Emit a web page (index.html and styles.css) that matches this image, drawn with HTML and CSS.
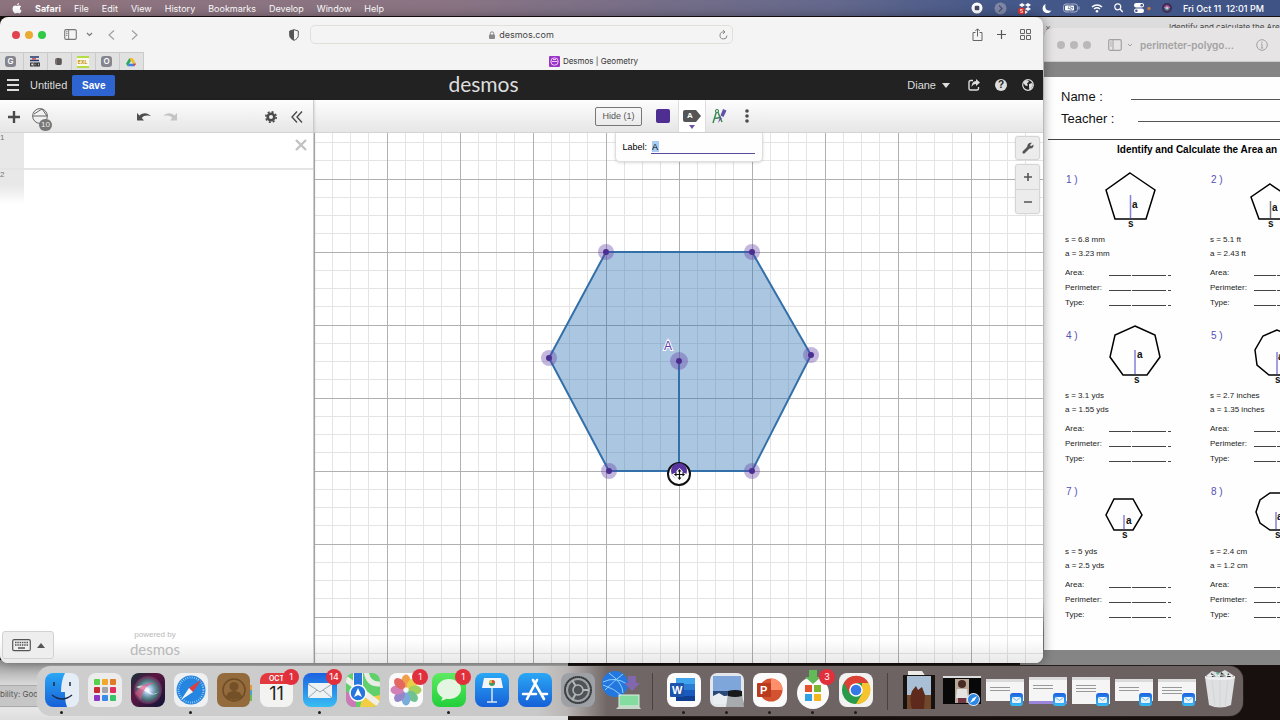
FILE: index.html
```html
<!DOCTYPE html>
<html lang="en">
<head>
<meta charset="utf-8">
<title>Desmos | Geometry</title>
<link rel="stylesheet" href="styles.css">
</head>
<body>
<svg class="defs" aria-hidden="true">
  <defs>
    <linearGradient id="g-blue" x2="0" y2="1"><stop offset="0" stop-color="#2aa7f5"/><stop offset="1" stop-color="#1660d8"/></linearGradient>
    <linearGradient id="g-mail" x2="0" y2="1"><stop offset="0" stop-color="#1c62e0"/><stop offset="1" stop-color="#39bdf3"/></linearGradient>
    <linearGradient id="g-green" x2="0" y2="1"><stop offset="0" stop-color="#5eea62"/><stop offset="1" stop-color="#22cf3a"/></linearGradient>
    <radialGradient id="g-siri"><stop offset="0" stop-color="#fff"/><stop offset=".3" stop-color="#9dbde0"/><stop offset=".7" stop-color="#4a8c86" stop-opacity=".8"/><stop offset="1" stop-color="#8b3b78" stop-opacity=".5"/></radialGradient>
    <linearGradient id="g-siribg" x2="1" y2="1"><stop offset="0" stop-color="#12303a"/><stop offset=".4" stop-color="#5b1741"/><stop offset="1" stop-color="#0c1436"/></linearGradient>
    <pattern id="grid" width="73" height="73" patternUnits="userSpaceOnUse" x="0" y="46">
      <path d="M18.5 0V73M36.500 0V73M54.500 0V73M0 18.500H73M0 36.500H73M0 54.500H73" stroke="#e4e4e4" fill="none"/>
      <path d="M.5 0V73M0 .5H73" stroke="#b0b0b0" fill="none"/>
    </pattern>
    <symbol id="i-mailbadge" viewBox="0 0 13 13"><rect width="13" height="13" rx="3" fill="url(#g-mail)"/><rect x="2" y="4" width="9" height="6" rx="1" fill="#e8f4fb"/><path d="M2 4l4.500 3.500L11 4" stroke="#7fb9dc" fill="none"/></symbol>
    <symbol id="i-sidebar" viewBox="0 0 14 12"><rect x=".7" y=".7" width="12.600" height="10.600" rx="1.500" fill="none" stroke="currentColor" stroke-width="1.200"/><path d="M5 1v10M2.200 3h1.500M2.200 5h1.500M2.200 7h1.500" stroke="currentColor"/></symbol>
  </defs>
</svg>

<header class="menubar">
  <nav class="menus">
    <svg class="apple" viewBox="0 0 14 16"><path fill="currentColor" d="M10 0c.1 1.700-1.300 3.300-3 3.400C6.800 1.700 8.300.2 10 0zM7.200 4.500c.6 0 1.600-.8 3-.8 1.100 0 2.200.6 2.800 1.500-2.600 1.500-2.100 5 .6 6-.5 1.700-2 4-3.400 4-1.100 0-1.400-.6-2.800-.6s-1.800.6-2.800.6C2.800 15.200.5 11.700.5 8.700.5 5.500 2.500 3.800 4.500 3.800c1.200 0 2.100.7 2.700.7z"/></svg>
    <button class="menu app-name">Safari</button><button class="menu">File</button><button class="menu">Edit</button><button class="menu">View</button><button class="menu">History</button><button class="menu">Bookmarks</button><button class="menu">Develop</button><button class="menu">Window</button><button class="menu">Help</button>
  </nav>
  <div class="status">
    <svg width="12" height="12" viewBox="0 0 12 12"><circle cx="6" cy="6" r="5.500" fill="#fff"/><rect x="3.700" y="3.700" width="4.600" height="4.600" rx="1" fill="#454a6c"/></svg>
    <svg width="13" height="13" viewBox="0 0 13 13"><circle cx="6.500" cy="6.500" r="6" fill="#8087a5"/><path d="M5 3.500l3 3-3 3" stroke="#4d5682" stroke-width="1.500" fill="none"/></svg>
    <svg width="13" height="13" viewBox="0 0 13 13"><path fill="#fff" d="M4 1l3 2-3 2-3-2zM10 1l3 2-3 2-3-2zM10 5l3 2-3 2-3-2zM7 8.500l3 1.500-3 2z"/><circle cx="3.500" cy="9" r="3.500" fill="#e0352f"/><path d="M4.500 7.500h-2V9h2v1.500h-2" stroke="#fff" stroke-width=".7" fill="none"/></svg>
    <svg width="10" height="11" viewBox="0 0 10 11"><path fill="#fff" d="M3.500 1C2.500 6 5 8.500 9.500 7.500 8 10.500 3.500 11 1.500 8.300-.3 5.500 1 2 3.500 1z"/></svg>
    <svg width="17" height="10" viewBox="0 0 17 10"><rect x=".5" y="1" width="14" height="8" rx="2.500" fill="none" stroke="#a9b0cc"/><rect x="2" y="2.500" width="9" height="5" rx="1" fill="#fff"/><path d="M7.500 0L5 5.500h2.500L6.500 10 10 4.500H7.700z" fill="#fff" stroke="#4d5a88" stroke-width=".6"/><path d="M16 3.500v3" stroke="#a9b0cc"/></svg>
    <svg width="12" height="10" viewBox="0 0 12 10"><path d="M1 4a7.500 7.500 0 0 1 10 0M3 6a4.800 4.800 0 0 1 6 0" fill="none" stroke="#fff" stroke-width="1.500"/><circle cx="6" cy="8.300" r="1.300" fill="#fff"/></svg>
    <svg width="9" height="10" viewBox="0 0 9 10"><circle cx="3.800" cy="3.800" r="3" fill="none" stroke="#fff" stroke-width="1.200"/><path d="M6 6l2.700 3" stroke="#fff" stroke-width="1.300"/></svg>
    <svg width="17" height="10" viewBox="0 0 17 10"><rect width="10" height="4.500" rx="2.200" fill="#fff"/><circle cx="7.700" cy="2.200" r="1.300" fill="#4a5a88"/><rect y="5.500" width="10" height="4.500" rx="2.200" fill="#fff"/><circle cx="2.400" cy="7.700" r="1.300" fill="#4a5a88"/><circle cx="15" cy="5.500" r="1.700" fill="#c9763c"/></svg>
    <svg width="10" height="10" viewBox="0 0 10 10"><circle cx="5" cy="5" r="5" fill="#3b2d55"/><circle cx="5" cy="5" r="3.200" fill="url(#g-siri)"/><path d="M2 5q3-4 6 0" stroke="#f4a" fill="none"/></svg>
    <time>Fri Oct 11&nbsp; 12:01 PM</time>
  </div>
</header>

<main class="desktop">
  <section class="backwin backwin-top"><span>×</span><span class="back-title">Identify and calculate the Are</span></section>
  <section class="backwin backwin-bottom"><div class="back-tab">bility: Goo</div></section>

  <section class="preview">
    <header class="preview-bar">
      <i class="dot off"></i><i class="dot off"></i><i class="dot off"></i>
      <svg class="side" width="14" height="12"><use href="#i-sidebar"/></svg>
      <svg width="6" height="4" viewBox="0 0 6 4"><path d="M1 1l2 2 2-2" stroke="currentColor" fill="none"/></svg>
      <h2>perimeter-polygo...</h2>
      <svg class="info" width="12" height="12" viewBox="0 0 12 12"><circle cx="6" cy="6" r="5.300" fill="none" stroke="currentColor"/><path d="M6 5v4M6 2.700v1.300M4.800 9h2.400M5 5h1" stroke="currentColor" fill="none"/></svg>
    </header>
    <div class="paper">
      <div class="field"><span>Name :</span><i></i></div>
      <div class="field"><span>Teacher :</span><i></i></div>
      <h1>Identify and Calculate the Area an</h1>
      <div class="problems">
        <article><div class="fig"><b>1 )</b><svg viewBox="0 0 124 60"><path class="shape" d="M45 3L70 20 61 49H30L21 20z"/><path class="apo" d="M45.500 25V48"/><text x="47" y="38">a</text><text x="43" y="57">s</text></svg></div><p>s = 6.8 mm</p><p>a = 3.23 mm</p><dl><dt>Area:</dt><dd></dd><dt>Perimeter:</dt><dd></dd><dt>Type:</dt><dd></dd></dl></article>
        <article><div class="fig"><b>2 )</b><svg viewBox="0 0 124 60"><path class="shape" d="M40 14L59 27 51 49H29L21 27z"/><path class="apo gray" d="M40.500 31V48"/><text x="42" y="41">a</text><text x="38" y="57">s</text></svg></div><p>s = 5.1 ft</p><p>a = 2.43 ft</p><dl><dt>Area:</dt><dd></dd><dt>Perimeter:</dt><dd></dd><dt>Type:</dt><dd></dd></dl></article>
        <article><div class="fig"><b>4 )</b><svg viewBox="0 0 124 60"><path class="shape" d="M50 0L70 9 75 31 62 49H38L25 31 30 9z"/><path class="apo" d="M50 24V48"/><text x="52" y="32">a</text><text x="49" y="57">s</text></svg></div><p>s = 3.1 yds</p><p>a = 1.55 yds</p><dl><dt>Area:</dt><dd></dd><dt>Perimeter:</dt><dd></dd><dt>Type:</dt><dd></dd></dl></article>
        <article><div class="fig"><b>5 )</b><svg viewBox="0 0 124 60"><path class="shape" d="M47 4L33 10 25 24 27 39 39 49H55L67 39 69 24 61 10z"/><path class="apo" d="M47 26V48"/><text x="48" y="34">a</text><text x="45" y="57">s</text></svg></div><p>s = 2.7 inches</p><p>a = 1.35 inches</p><dl><dt>Area:</dt><dd></dd><dt>Perimeter:</dt><dd></dd><dt>Type:</dt><dd></dd></dl></article>
        <article><div class="fig"><b>7 )</b><svg viewBox="0 0 124 60"><path class="shape" d="M29 17H48L57 33 48 48H29L21 33z"/><path class="apo" d="M39 33V47"/><text x="41" y="42">a</text><text x="37" y="56">s</text></svg></div><p>s = 5 yds</p><p>a = 2.5 yds</p><dl><dt>Area:</dt><dd></dd><dt>Perimeter:</dt><dd></dd><dt>Type:</dt><dd></dd></dl></article>
        <article><div class="fig"><b>8 )</b><svg viewBox="0 0 124 60"><path class="shape" d="M40 11H52L62 18 66 30 62 41 52 48H40L30 41 26 30 30 18z"/><path class="apo" d="M46 30V47"/><text x="47" y="38">a</text><text x="45" y="56">s</text></svg></div><p>s = 2.4 cm</p><p>a = 1.2 cm</p><dl><dt>Area:</dt><dd></dd><dt>Perimeter:</dt><dd></dd><dt>Type:</dt><dd></dd></dl></article>
      </div>
    </div>
  </section>

  <section class="safari">
    <header class="chrome">
      <div class="chrome-left">
        <i class="dot red"></i><i class="dot amber"></i><i class="dot green"></i>
        <button class="side" aria-label="Sidebar"><svg width="13" height="11"><use href="#i-sidebar"/></svg></button>
        <svg class="chev" width="7" height="5" viewBox="0 0 7 5"><path d="M1 1l2.500 2.500L6 1" stroke="currentColor" stroke-width="1.200" fill="none"/></svg>
        <button class="back" aria-label="Back"><svg width="7" height="10" viewBox="0 0 7 10"><path d="M6 .5L1 5l5 4.500" stroke="#a0a0a0" stroke-width="1.200" fill="none"/></svg></button>
        <button class="fwd" aria-label="Forward"><svg width="7" height="10" viewBox="0 0 7 10"><path d="M1 .5L6 5 1 9.500" stroke="#a0a0a0" stroke-width="1.200" fill="none"/></svg></button>
        <svg class="shield" width="10" height="12" viewBox="0 0 10 12"><path d="M5 .7L9.300 2v4.500c0 2.300-2 4-4.300 4.800C2.700 10.500.7 8.800.7 6.500V2z" fill="none" stroke="#555"/><path d="M5 .7v10.600C2.700 10.500.7 8.800.7 6.500V2z" fill="#555"/></svg>
      </div>
      <div class="url"><svg width="6" height="8" viewBox="0 0 6 8"><rect y="3.500" width="6" height="4.500" rx="1" fill="#888"/><path d="M1.300 4V2.500a1.700 1.700 0 0 1 3.400 0V4" stroke="#888" fill="none"/></svg><span>desmos.com</span>
        <button class="reload" aria-label="Reload"><svg width="9" height="10" viewBox="0 0 9 10"><path d="M5 2a3.500 3.500 0 1 0 3 3.500M4 0l2 2-2 2" stroke="#888" fill="none"/></svg></button></div>
      <div class="chrome-right">
        <button aria-label="Share"><svg width="11" height="13" viewBox="0 0 11 13"><path d="M3.500 4.500H1v8h9v-8H7.500M5.500 8.500V1M3.300 3l2.200-2.200L7.700 3" stroke="#666" fill="none"/></svg></button>
        <button aria-label="New tab"><svg width="9" height="9" viewBox="0 0 9 9"><path d="M4.500 0v9M0 4.500h9" stroke="#555" stroke-width="1.200"/></svg></button>
        <button aria-label="Tab overview"><svg width="11" height="11" viewBox="0 0 11 11"><path d="M.5.5h4v4h-4zM6.500.5h4v4h-4zM.5 6.500h4v4h-4zM6.500 6.500h4v4h-4z" stroke="#666" fill="none"/></svg></button>
      </div>
    </header>
    <nav class="tabs">
      <div class="pins">
        <button class="pin"><span class="fav">G</span></button>
        <button class="pin"><svg width="10" height="11" viewBox="0 0 10 11"><path d="M0 1h9M0 4.500h9" stroke="#223a70" stroke-width="1.600"/><path d="M2 2.800h4" stroke="#c33" stroke-width="1.300"/><path d="M3 7H.7v3H3M4 7h2v3H4zM7.300 7h2v3h-2z" stroke="#222" stroke-width="1.100" fill="none"/></svg></button>
        <button class="pin"><svg width="9" height="9" viewBox="0 0 9 9"><rect x="1" y="1" width="7" height="7" rx="2" fill="#77706e"/><path d="M4 1v7M6 2v6" stroke="#443d3c"/></svg></button>
        <button class="pin"><span class="exl">EXL</span></button>
        <button class="pin"><span class="fav">O</span></button>
        <button class="pin"><svg width="10" height="10" viewBox="0 0 10 10"><path d="M3.400 1L0 6.700 1.700 9.200 5 3.700z" fill="#2da95a"/><path d="M3.400 1h3.200L10 6.700H7z" fill="#f4bd28"/><path d="M3 6.700h7L8.300 9.200H1.700z" fill="#3f7fe8"/><path d="M7 6.700h3L8.300 9.200z" fill="#e0473a"/></svg></button>
      </div>
      <div class="tab"><svg width="11" height="11" viewBox="0 0 11 11"><rect width="11" height="11" rx="1" fill="#9b34c9"/><circle cx="5.500" cy="5.500" r="3.700" fill="none" stroke="#e9c8f5"/><path d="M2.500 5.500h6M4 3.500h3" stroke="#e9c8f5"/></svg><span>Desmos | Geometry</span></div>
    </nav>

    <div class="topbar">
      <div class="top-left">
        <button class="burger" aria-label="Menu"><i></i><i></i><i></i></button>
        <span class="doc">Untitled</span><button class="save">Save</button>
      </div>
      <div class="logo">desmos</div>
      <div class="top-right">
        <button class="user">Diane <svg width="8" height="5" viewBox="0 0 8 5"><path d="M0 0h8L4 5z" fill="#ddd"/></svg></button>
        <button aria-label="Share"><svg width="12" height="12" viewBox="0 0 12 12"><path d="M5 1.500H2.500A1.500 1.500 0 0 0 1 3v6.500A1.500 1.500 0 0 0 2.500 11H9a1.500 1.500 0 0 0 1.500-1.500V8" stroke="#ddd" stroke-width="1.400" fill="none"/><path d="M8 0l4 3.500L8 7V5C6 5 4.500 6 3.500 8 3.500 4.500 5 2.300 8 2z" fill="#ddd"/></svg></button>
        <button class="help" aria-label="Help">?</button>
        <button aria-label="Language"><svg width="12" height="12" viewBox="0 0 12 12"><circle cx="6" cy="6" r="5.300" fill="none" stroke="#ddd" stroke-width="1.200"/><path d="M2 2.500l3-1.500 2 1.500-2 2 1 2-2 .5-2-2zM7 5l3-1 1 2-2 4-1.500 1-.5-3z" fill="#ddd"/></svg></button>
      </div>
    </div>

    <div class="app-body">
      <aside class="side-panel">
        <div class="toolbar">
          <button aria-label="Add"><svg width="12" height="12" viewBox="0 0 12 12"><path d="M6 0v12M0 6h12" stroke="#4a4a4a" stroke-width="2.400"/></svg></button>
          <button class="tools" aria-label="Tools"><svg width="17" height="17" viewBox="0 0 17 17"><circle cx="8" cy="8" r="7.400" fill="none" stroke="#666"/><path d="M1 8h14M2 6l8-5 5 7" stroke="#666" fill="none"/></svg><span class="count">10</span></button>
          <button class="undo" aria-label="Undo"><svg width="14" height="9" viewBox="0 0 14 9"><path d="M0 1v7.500h7L4.800 6C7 3.500 10.500 3 14 4.300 10.500.3 6 .2 2.500 3.500z" fill="#4f4f4f"/></svg></button>
          <button class="redo" aria-label="Redo"><svg width="14" height="9" viewBox="0 0 14 9"><path d="M14 1v7.500H7L9.200 6C7 3.500 3.500 3 0 4.300 3.500.3 8 .2 11.500 3.500z" fill="#c4c4c4"/></svg></button>
          <button class="gear" aria-label="Settings"><svg width="12" height="12" viewBox="0 0 12 12"><circle cx="6" cy="6" r="3.300" fill="none" stroke="#4a4a4a" stroke-width="2.600"/><circle cx="6" cy="6" r="5.200" fill="none" stroke="#4a4a4a" stroke-width="1.600" stroke-dasharray="2.040 2.040"/></svg></button>
          <button aria-label="Collapse"><svg width="12" height="12" viewBox="0 0 12 12"><path d="M6 .5L1 6l5 5.500M11 .5L6 6l5 5.500" stroke="#4a4a4a" stroke-width="1.400" fill="none"/></svg></button>
        </div>
        <div class="expr"><span class="num">1</span><button aria-label="Delete"><svg width="12" height="12" viewBox="0 0 12 12"><path d="M1 1l10 10M11 1L1 11" stroke="#c2c2c2" stroke-width="2.400"/></svg></button></div>
        <div class="expr ghost"><span class="num">2</span></div>
        <footer class="panel-foot">
          <button class="keypad" aria-label="Keypad"><svg width="19" height="13" viewBox="0 0 19 13"><rect x=".7" y=".7" width="17.600" height="11" rx="1.500" fill="none" stroke="#555" stroke-width="1.200"/><path d="M3 3.500h13M3 6h13" stroke="#555" stroke-width="1.300" stroke-dasharray="1.500 .8"/><path d="M6 9h7" stroke="#555" stroke-width="1.500"/></svg><svg width="8" height="5" viewBox="0 0 8 5"><path d="M0 5h8L4 0z" fill="#555"/></svg></button>
          <div class="powered"><span>powered by</span><b>desmos</b></div>
        </footer>
      </aside>

      <div class="graph-panel">
        <div class="toolbar center">
          <button class="hide">Hide (1)</button>
          <button class="swatch" aria-label="Color"></button>
          <button class="labeltab" aria-label="Label"><svg width="18" height="12" viewBox="0 0 18 12"><path d="M2 0h11l5 6-5 6H2a2 2 0 0 1-2-2V2a2 2 0 0 1 2-2z" fill="#555"/></svg><b>A</b><i></i></button>
          <button class="compass" aria-label="Construction"><svg width="15" height="16" viewBox="0 0 15 16"><path d="M5 2L1 15M5 2l5 12M2.500 10q4 1 6-2" stroke="#3d8b52" stroke-width="1.500" fill="none"/><circle cx="5" cy="3" r="1.600" fill="#d9ead9" stroke="#3d8b52"/><path d="M11 1l3.500 1.500-3 6.500-3-1.500z" fill="#6450a8"/><path d="M8 9l-2 6 4-5z" fill="#6450a8"/></svg></button>
          <button aria-label="More"><svg width="4" height="14" viewBox="0 0 4 14"><g fill="#4a4a4a"><circle cx="2" cy="2" r="1.800"/><circle cx="2" cy="7" r="1.800"/><circle cx="2" cy="12" r="1.800"/></g></svg></button>
        </div>
        <div class="graph">
          <svg class="plot" width="100%" height="100%">
            <rect width="100%" height="100%" fill="url(#grid)"/>
            <path d="M292 119H438L497 222 438 338 295 338 235 225z" fill="#2d70b3" fill-opacity=".4" stroke="#336fa9" stroke-width="2"/>
            <path d="M365 228V338" stroke="#336fa9" stroke-width="2"/>
            <g fill="#6042a6" fill-opacity=".38"><circle cx="292" cy="119" r="8"/><circle cx="438" cy="119" r="8"/><circle cx="497" cy="222" r="8"/><circle cx="438" cy="338" r="8"/><circle cx="295" cy="338" r="8"/><circle cx="235" cy="225" r="8"/><circle cx="365" cy="228" r="9"/></g>
            <g fill="#4c2d91"><circle cx="292" cy="119" r="3"/><circle cx="438" cy="119" r="3"/><circle cx="497" cy="222" r="3"/><circle cx="438" cy="338" r="3"/><circle cx="295" cy="338" r="3"/><circle cx="235" cy="225" r="3"/><circle cx="365" cy="228" r="3"/></g>
            <text class="ptlabel" x="350" y="217">A</text>
            <circle cx="365" cy="341" r="11" fill="#fff" stroke="#111" stroke-width="2"/>
            <circle cx="365" cy="338" r="8" fill="#5835a0"/>
            <path d="M365.500 335l3 3v2h2l3 1.500-3 3-5 5-5-5-3-3 3-1.500h2v-2z" fill="#fff"/>
            <path d="M365.500 338v7M362 341.500h7" stroke="#111" stroke-width="1.200"/>
            <path d="M365.500 336l-2 2.500h4zM365.500 347l-2-2.500h4zM360 341.500l2.500-2v4zM371 341.500l-2.500-2v4z" fill="#111"/>
          </svg>
          <div class="popup"><label for="lbl">Label:</label><input id="lbl" value="A"></div>
          <div class="controls">
            <button class="ctl" aria-label="Graph settings"><svg width="12" height="12" viewBox="0 0 12 12"><path d="M1.800 10.200L7 5" stroke="#555" stroke-width="2.800" stroke-linecap="round"/><path d="M10 .8L8 3l1 1.200 2.400-1.700c.6 2.700-1.200 4.500-4 4L5.300 4.700C5 2 7 .2 10 .8z" fill="#555"/></svg></button>
            <div class="zoomers"><button class="ctl" aria-label="Zoom in"><svg width="8" height="8" viewBox="0 0 8 8"><path d="M4 0v8M0 4h8" stroke="#555" stroke-width="1.600"/></svg></button><button class="ctl" aria-label="Zoom out"><svg width="8" height="8" viewBox="0 0 8 8"><path d="M0 4h8" stroke="#555" stroke-width="1.600"/></svg></button></div>
          </div>
        </div>
      </div>
    </div>
  </section>

  <footer class="dock-wrap"><div class="dock">
    <a class="app run"><svg viewBox="0 0 34 34"><rect width="34" height="34" rx="8" fill="#e4ecf5"/><path d="M8 0h12c-3 6-4 12-4 19h4c0 5 0 10 2 15H8a8 8 0 0 1-8-8V8a8 8 0 0 1 8-8z" fill="url(#g-blue)"/><path d="M9 9v4M25 9v4M7 22q10 8 20 0" stroke="#1b2b45" stroke-width="1.500" fill="none"/></svg></a>
    <a class="app"><svg viewBox="0 0 34 34"><rect width="34" height="34" rx="8" fill="#ececec"/><g><rect x="6" y="6" width="6" height="6" rx="1" fill="#58d04c"/><rect x="14" y="6" width="6" height="6" rx="1" fill="#f0a72a"/><rect x="22" y="6" width="6" height="6" rx="1" fill="#e07a28"/><rect x="6" y="14" width="6" height="6" rx="1" fill="#c92b35"/><rect x="14" y="14" width="6" height="6" rx="1" fill="#a4a4a8"/><rect x="22" y="14" width="6" height="6" rx="1" fill="#dd3060"/><rect x="6" y="22" width="6" height="6" rx="1" fill="#8d37c4"/><rect x="14" y="22" width="6" height="6" rx="1" fill="#3a8ae8"/><rect x="22" y="22" width="6" height="6" rx="1" fill="#37c368"/></g></svg></a>
    <a class="app"><svg viewBox="0 0 34 34"><rect width="34" height="34" rx="8" fill="url(#g-siribg)"/><circle cx="17" cy="17" r="14" fill="url(#g-siri)"/><path d="M5 14q10-4 13 3t11 1q-6 6-12 2T5 14z" fill="#fff" opacity=".65"/><path d="M4 20q9-12 20-10-12 2-14 17" fill="#f04d82" opacity=".6"/></svg></a>
    <a class="app run"><svg viewBox="0 0 34 34"><rect width="34" height="34" rx="8" fill="#eef0f2"/><circle cx="17" cy="17" r="14.500" fill="#2486e0"/><circle cx="17" cy="17" r="12.500" fill="none" stroke="#d5eafc" stroke-width="2" stroke-dasharray=".6 1.600"/><path d="M27 7L15 15l4 4z" fill="#e43b3b"/><path d="M7 27l8-12 4 4z" fill="#f4f4f4"/></svg></a>
    <a class="app"><svg viewBox="0 0 34 34"><path d="M30 12h5v5h-5z" fill="#e49a3c"/><path d="M30 17h5v5h-5z" fill="#4ba2c8"/><path d="M30 22h5v6h-5z" fill="#6cbb56"/><rect width="33" height="34" rx="7" fill="#946b3d"/><circle cx="17" cy="17" r="11" fill="none" stroke="#6e4c25" stroke-width="1.500"/><circle cx="17" cy="13.500" r="4.500" fill="#735027"/><path d="M9 24q1-6 8-6t8 6q-8 6-16 0z" fill="#735027"/></svg></a>
    <a class="app cal"><span class="month">OCT</span><span class="day">11</span><em>1</em></a>
    <a class="app run"><svg viewBox="0 0 34 34"><rect width="34" height="34" rx="8" fill="url(#g-mail)"/><rect x="5" y="10" width="24" height="15" rx="2" fill="#eef2f4"/><path d="M5 11l12 8 12-8M5 25l9-8M29 25l-9-8" stroke="#98a5ad" fill="none"/></svg><em>14</em></a>
    <a class="app"><svg viewBox="0 0 34 34"><clipPath id="mapclip"><rect width="34" height="34" rx="8"/></clipPath><g clip-path="url(#mapclip)"><path fill="#5fd06a" d="M0 0h34v34H0z"/><path fill="#cf78b8" d="M0 18l10 8v8H0z"/><path fill="#f3ce45" d="M16 26l18-4v12H14z"/><path d="M0 6l34 26" stroke="#efefe8" stroke-width="6"/><path d="M20-2q2 14 14 13" stroke="#e9ebe6" stroke-width="5" fill="none"/><path d="M12 0v18" stroke="#fff" stroke-width="10"/><path d="M12 0v18" stroke="#2a77dd" stroke-width="8"/></g><circle cx="12" cy="20" r="8" fill="#2574df" stroke="#fff" stroke-width="1.500"/><path d="M12 15l4 9-4-2-4 2z" fill="#fff"/></svg></a>
    <a class="app"><svg viewBox="0 0 34 34"><rect width="34" height="34" rx="8" fill="#fafafa"/><g transform="translate(17 17)" opacity=".88"><ellipse cy="-9" rx="4.500" ry="6.500" fill="#f29334"/><ellipse cy="-9" rx="4.500" ry="6.500" fill="#e5c832" transform="rotate(45)"/><ellipse cy="-9" rx="4.500" ry="6.500" fill="#9acb48" transform="rotate(90)"/><ellipse cy="-9" rx="4.500" ry="6.500" fill="#5dbb82" transform="rotate(135)"/><ellipse cy="-9" rx="4.500" ry="6.500" fill="#6aa3d6" transform="rotate(180)"/><ellipse cy="-9" rx="4.500" ry="6.500" fill="#8a78c4" transform="rotate(225)"/><ellipse cy="-9" rx="4.500" ry="6.500" fill="#cc71ad" transform="rotate(270)"/><ellipse cy="-9" rx="4.500" ry="6.500" fill="#e2534b" transform="rotate(315)"/></g></svg><em>1</em></a>
    <a class="app run"><svg viewBox="0 0 34 34"><rect width="34" height="34" rx="8" fill="url(#g-green)"/><path d="M17 6c7 0 12 4.500 12 10s-5 10-12 10c-1 0-2 0-3-.3-1 1-3 1.800-5 1.800 1-1 1.500-2 1.500-3C7 22.500 5 19.500 5 16 5 10.500 10 6 17 6z" fill="#e4f6e2"/></svg><em>1</em></a>
    <a class="app"><svg viewBox="0 0 34 34"><rect width="34" height="34" rx="8" fill="url(#g-blue)"/><path d="M9 5h17l2 10H7z" fill="#f2f6fa"/><path d="M17 15v14M12 29h10" stroke="#d9e6f3" stroke-width="1.500"/><circle cx="17" cy="10" r="3" fill="#3f9b65"/><path d="M17 10V7a3 3 0 0 1 3 3z" fill="#e34b3d"/><path d="M17 10h-3a3 3 0 0 1 3-3z" fill="#e8b63d"/></svg></a>
    <a class="app"><svg viewBox="0 0 34 34"><rect width="34" height="34" rx="8" fill="url(#g-blue)"/><path d="M19 7L9 26M15 7l11 19M5 21h13M23 21h6" stroke="#fff" stroke-width="2.600" stroke-linecap="round"/></svg></a>
    <a class="app"><svg viewBox="0 0 34 34"><rect width="34" height="34" rx="8" fill="#9da1a5"/><circle cx="17" cy="17" r="14" fill="#505356"/><circle cx="17" cy="17" r="11" fill="none" stroke="#a0a3a6" stroke-width="2"/><circle cx="17" cy="17" r="13" fill="none" stroke="#2b2d2f" stroke-width="1.500" stroke-dasharray="1 1"/><circle cx="17" cy="17" r="5" fill="none" stroke="#b4b7ba" stroke-width="1.500"/><path d="M22 17h6M14.500 12.700l-3-5.200M14.500 21.300l-3 5.200" stroke="#b4b7ba" stroke-width="2"/></svg></a>
    <a class="app wide"><svg viewBox="0 0 40 40"><circle cx="14" cy="14" r="13" fill="#2577e0"/><path d="M2 12q12-6 24 2M4 20q10-10 18-16M8 3q14 10 14 20M2 15q12 4 18 10" stroke="#8cd2ff" fill="none"/><path d="M27 6h8v7h4l-8 8-8-8h4z" fill="#8168ae"/><rect x="18" y="25" width="20" height="11" fill="#85dca0" stroke="#e2eee5"/><path d="M15 39h25l-2-3H18z" fill="#c8d9cc"/></svg></a>
    <i class="sep"></i>
    <a class="app run"><svg viewBox="0 0 34 34"><rect width="34" height="34" rx="8" fill="#fbfbfb"/><path d="M9 5h19v6H9z" fill="#41a5ee"/><path d="M9 11h19v6H9z" fill="#2b7cd3"/><path d="M9 17h19v6H9z" fill="#185abd"/><path d="M9 23h19v5H9z" fill="#103f91"/><rect x="3" y="10" width="14" height="14" rx="1" fill="#1d52ad"/><text x="5" y="21" class="tile">W</text></svg></a>
    <a class="app run"><svg viewBox="0 0 34 34"><rect width="34" height="34" rx="7" fill="#e3e6ea"/><path d="M3 3h28v16H3z" fill="#7ea6db"/><path d="M3 18h28v5H3z" fill="#29487a"/><path d="M3 23l6-3 5 3 17-1v9H3z" fill="#e9eef2"/><path d="M18 20q7-3 14 0l2 14H16z" fill="#a7abae"/><path d="M18 18q7-2 14 0v5q-7 2-14 0z" fill="#17191b"/></svg></a>
    <a class="app run"><svg viewBox="0 0 34 34"><rect width="34" height="34" rx="8" fill="#fbfbfb"/><circle cx="18" cy="17" r="11.500" fill="#d35230"/><path d="M18 5.500A11.500 11.500 0 0 1 29.500 17H18z" fill="#ff8f6b"/><rect x="4" y="10" width="14" height="14" rx="1" fill="#b83b1d"/><text x="7" y="21" class="tile">P</text></svg></a>
    <a class="app run"><svg viewBox="0 0 34 34"><circle cx="17" cy="20" r="16" fill="#fbfbfb"/><path d="M9 12h7v7H9z" fill="#e5532e"/><path d="M18 12h7v7h-7z" fill="#7db72f"/><path d="M9 21h7v7H9z" fill="#32a1e5"/><path d="M18 21h7v7h-7z" fill="#f5b51f"/><path d="M13-3h8v7h4l-8 7-8-7h4z" fill="#61b957"/></svg><em>3</em></a>
    <a class="app run"><svg viewBox="0 0 34 34"><rect width="34" height="34" rx="8" fill="#f2f2f2"/><circle cx="17" cy="17" r="14" fill="#2a9b4b"/><path d="M5 10a14 14 0 0 1 24.500 0H17z" fill="#dd4035"/><path d="M5 10l6 11 6-4V10z" fill="#dd4035"/><path d="M29.500 10A14 14 0 0 1 17 31l6-10V10z" fill="#f7c42f"/><circle cx="17" cy="17" r="6.800" fill="#fff"/><circle cx="17" cy="17" r="5.300" fill="#3479e5"/></svg></a>
    <i class="sep"></i>
    <a class="app"><svg viewBox="0 0 34 34"><path d="M6-2h14l4 6H6z" fill="#ecece9"/><path fill="#17120f" d="M1 2h32v34H1z"/><path fill="#a8bfd6" d="M5 3h24v19H5z"/><path fill="#70482c" d="M5 22h24v14H5z"/><path d="M10 36q-3-11 0-18l4-5 2 4 4-3 3 8-1 14z" fill="#5d2a1b"/></svg></a>
    <a class="app thumb"><svg viewBox="0 0 38 28"><path fill="#080808" d="M0 0h38v28H0z"/><path fill="#ddd" d="M0 0h38v2H0z"/><path fill="#b9a796" d="M12 3h14v24H12z"/><circle cx="19" cy="8" r="4" fill="#4a2b24"/><path d="M14 13h10l1 9H13z" fill="#e6e3e3"/><path d="M15 22h8v5h-8z" fill="#713641"/></svg><svg class="mini" viewBox="0 0 13 13"><circle cx="6.500" cy="6.500" r="6.500" fill="#e9f2fa"/><circle cx="6.500" cy="6.500" r="5.500" fill="#2a87e3"/><path d="M10 3L7.500 7.500 3 10l2.500-4.500z" fill="#fff"/></svg></a>
    <a class="app thumb"><span class="doc-thumb"><i></i><i></i></span><svg class="mini"><use href="#i-mailbadge"/></svg></a>
    <a class="app thumb"><span class="doc-thumb tall purple"><i></i><i></i></span><svg class="mini"><use href="#i-mailbadge"/></svg></a>
    <a class="app thumb"><span class="doc-thumb tall"><i></i><i></i><i></i></span><svg class="mini"><use href="#i-mailbadge"/></svg></a>
    <a class="app thumb"><span class="doc-thumb"><i></i><i></i></span><svg class="mini"><use href="#i-mailbadge"/></svg></a>
    <a class="app thumb"><span class="doc-thumb"><i></i><i></i><i></i></span><svg class="mini"><use href="#i-mailbadge"/></svg></a>
    <a class="app wide"><svg viewBox="0 0 34 40"><path d="M4 5l5-4 7 2 6-3 8 5-2 5H5z" fill="#d9dde0"/><path d="M8 3l5 3-4 1zM18 2l5 4-6 1zM25 3l3 4-4 0z" fill="#28322f"/><path d="M13 2l4 2-3 2z" fill="#5bae8a"/><path d="M2 7h30l-4 28q-11 5-22 0z" fill="#e7e8ea" opacity=".94"/><path d="M9 10l3 26M17 10v27M25 10l-3 26" stroke="#d3d5d7" fill="none"/><ellipse cx="17" cy="7" rx="15" ry="2" fill="none" stroke="#f8f8f8"/></svg></a>
  </div></footer>
</main>
</body>
</html>
```

FILE: styles.css
```css
* { box-sizing: border-box; }
html, body { height: 100%; }
body { margin: 0; display: flex; flex-direction: column; overflow: hidden; background: #17100f; font-family: Inter, "Liberation Sans", sans-serif; font-size: 9px; color: #333; }
button { padding: 0; border: 0; background: none; font: inherit; color: inherit; display: flex; align-items: center; justify-content: center; flex: none; }
svg { display: block; flex: none; overflow: visible; }
p, h1, h2, dl, dd { margin: 0; }
.defs { position: absolute; width: 0; height: 0; }

/* menu bar */
.menubar { flex: none; height: 16px; display: flex; align-items: center; justify-content: space-between; padding: 0 13px 0 12px; color: #fff; background: linear-gradient(90deg, #8d737d 0%, #8a7483 35%, #64688c 65%, #445889 78%, #3f5485 100%); }
.menus { display: flex; align-items: center; gap: 13px; }
.apple { width: 10px; height: 11px; }
.app-name { font-weight: 700; }
.status { display: flex; align-items: center; gap: 11px; white-space: nowrap; font-weight: 500; padding-right: 3px; }

/* windows */
.desktop { position: relative; flex: 1; min-height: 0; }
.backwin { position: absolute; background: #dcdcdc; overflow: hidden; }
.backwin-top { top: 1px; right: 0; bottom: 55px; width: 260px; display: flex; justify-content: space-between; padding: 5px 0 0 25px; color: #666; white-space: nowrap; background: linear-gradient(#dcdcdc 80px, #e4e4e4 80px 90%, #858585 95%); }
.back-title { width: 111px; color: #444; font-size: 8px; }
.backwin-bottom { left: 0; bottom: 0; width: 568px; height: 60px; background: linear-gradient(#999, #d8d8d8 24px, #e6e6e6 50px, #ddd); padding-top: 25px; }
.back-tab { height: 22px; line-height: 16px; background: #c6c6c6; border: solid #aaa; border-width: 1px 0; color: #555; font-size: 8px; }
.dot { width: 8px; height: 8px; border-radius: 50%; flex: none; }
.red { background: #e0424e; } .amber { background: #e9ab33; } .green { background: #2fcb45; } .off { background: #b9b9b9; }

/* document window */
.preview { position: absolute; top: 12px; right: 0; bottom: 55px; width: 236px; display: flex; flex-direction: column; background: #858585; border-radius: 8px 0 0 0; overflow: hidden; padding-bottom: 15px; }
.preview-bar { height: 34px; flex: none; display: flex; align-items: center; gap: 5px; padding: 0 12px 0 13px; background: #e6e4e4; border-bottom: 1px solid #ccc; color: #a2a2a2; }
.preview-bar .side { margin-left: 12px; }
.preview-bar h2 { flex: 1; margin-left: 2px; font-size: 10px; font-weight: 600; white-space: nowrap; }
.paper { flex: 1; min-height: 0; margin-top: 15px; padding: 8px 0 0 4px; overflow: hidden; background: #fefefe; color: #222; font-family: "Liberation Sans", Arial, sans-serif; font-size: 8px; }
.field { display: flex; align-items: flex-end; height: 22px; padding: 0 0 0 13px; font-size: 13px; line-height: 21px; color: #111; }
.field i { flex: 1; margin: 0 0 7px 28px; border-bottom: 1px solid #555; }
.field + .field i { margin-left: 24px; }
.paper h1 { margin-top: 10px; padding: 4px 0 0 69px; border-top: 1px solid #444; font-size: 10px; line-height: 11px; color: #000; white-space: nowrap; }
.problems { display: grid; grid-template-columns: 145px 145px; grid-auto-rows: 156px; padding: 15px 0 0 17px; }
.fig { display: flex; height: 60px; margin-bottom: 3px; }
.fig b { width: 20px; padding: 4px 0 0 1px; font-size: 10px; line-height: 12px; font-weight: 400; color: #5450b4; white-space: nowrap; }
.fig svg { width: 124px; height: 60px; }
.fig text { font-size: 10px; font-weight: 700; fill: #111; }
.shape { fill: none; stroke: #000; stroke-width: 1.5; }
.apo { stroke: #8580d8; stroke-width: 1.5; } .apo.gray { stroke: #777; }
.problems p { line-height: 14px; }
.problems dl { display: grid; grid-template-columns: 44px 62px; grid-auto-rows: 15px; margin-top: 4px; line-height: 15px; }
.problems dd { height: 1px; margin-top: 10px; background: linear-gradient(90deg, #444 22px, transparent 22px 23px, #444 23px 57px, transparent 57px 59px, #444 59px); }

/* browser window */
.safari { position: absolute; top: 1px; left: 0; right: 237px; bottom: 57px; display: flex; flex-direction: column; background: #f5f4f4; border-radius: 8px; overflow: hidden; box-shadow: 0 0 12px rgba(0,0,0,.4); }
.chrome { height: 35px; flex: none; display: grid; grid-template-columns: 1fr 423px 1fr; align-items: center; padding: 0 12px; }
.chrome-left { display: flex; align-items: center; gap: 5px; color: #777; }
.chrome-left .side { margin-left: 13px; }
.chev { margin-left: 4px; } .back { margin-left: 10px; } .fwd { margin-left: 11px; }
.shield { margin-left: auto; margin-right: 11px; }
.url { position: relative; height: 19px; display: flex; align-items: center; justify-content: center; gap: 4px; border: 1px solid #e0dfda; border-radius: 5px; color: #444; }
.reload { position: absolute; right: 4px; top: 4px; }
.chrome-right { display: flex; justify-content: flex-end; align-items: center; gap: 14px; }
.tabs { height: 18px; flex: none; display: flex; }
.pins { display: flex; background: #e2e1e1; }
.pin { width: 24px; border: solid #cacaca; border-width: 1px 1px 0 0; padding-right: 2px; }
.fav { width: 11px; height: 11px; border-radius: 3px; background: #85858f; color: #fff; font-size: 8px; line-height: 11px; font-weight: 600; }
.exl { width: 12px; height: 12px; background: #fafae8; border: solid #b5dc45; border-width: 2px 0; color: #d09a26; font-size: 5px; font-weight: 800; line-height: 8px; }
.tab { flex: 1; display: flex; align-items: center; justify-content: center; gap: 3px; font-size: 8px; }

.topbar { height: 30px; flex: none; display: flex; align-items: center; justify-content: space-between; padding: 0 9px 0 7px; background: #222; color: #ddd; font-family: "Liberation Sans", Arial, sans-serif; font-size: 11px; }
.top-left, .top-right { display: flex; align-items: center; flex: 1; }
.burger { flex-direction: column; gap: 3px; margin-right: 11px; }
.burger i { width: 12px; height: 2px; background: #ddd; }
.save { width: 43px; height: 21px; margin-left: 5px; border-radius: 2px; background: #2d64cf; color: #fff; font-size: 10px; font-weight: 700; }
.logo { margin: 0 74px 0 0; font-family: Lato, sans-serif; font-size: 21px; line-height: 28px; padding-bottom: 3px; }
.top-right { justify-content: flex-end; gap: 15px; }
.user { gap: 6px; margin-right: 3px; }
.help { width: 12px; height: 12px; border-radius: 50%; background: #ddd; color: #222; font-size: 10px; font-weight: 700; line-height: 12px; }

.app-body { flex: 1; min-height: 0; display: flex; background: #fff; position: relative; }
.app-body::after { content: ""; position: absolute; left: 0; right: 0; bottom: 0; height: 24px; background: linear-gradient(transparent, rgba(0,0,0,.09)); pointer-events: none; }
.side-panel { width: 314px; flex: none; display: flex; flex-direction: column; border-right: 1px solid #ccc; box-shadow: 0 0 3px rgba(0,0,0,.2); z-index: 1; }
.toolbar { height: 33px; flex: none; display: flex; align-items: center; padding: 1px 10px 0 8px; background: linear-gradient(#fdfdfd, #e6e6e6); border-bottom: 1px solid #d4d4d4; }
.tools { position: relative; margin-left: 12px; }
.count { position: absolute; left: 7px; top: 11px; width: 13px; height: 12px; border-radius: 6px; background: #777; color: #eee; font: 8px/12px "Liberation Sans", sans-serif; text-align: center; }
.undo { margin-left: auto; } .redo { margin-left: 12px; }
.gear { margin-left: auto; margin-right: 14px; }
.expr { height: 37px; flex: none; display: flex; justify-content: space-between; border-bottom: 2px solid #e4e4e4; }
.expr button { width: 24px; height: 23px; }
.num { width: 24px; background: #e8e8e8; color: #777; font: 8px/9px "Liberation Sans", sans-serif; }
.ghost { border: 0; height: 34px; } .ghost .num { background: linear-gradient(#e8e8e8 45%, #fff); }
.panel-foot { margin-top: auto; display: flex; align-items: flex-end; padding: 0 2px 4px; }
.keypad { width: 52px; height: 28px; gap: 6px; border: 1px solid #d2d2d2; border-radius: 3px; background: #eee; }
.powered { display: flex; flex-direction: column; width: 52px; margin: 0 0 1px 75px; color: #b9b9b9; font: 8px/10px "Liberation Sans", sans-serif; white-space: nowrap; align-items: center; }
.powered b { font: 400 15px/18px Lato, sans-serif; }

.graph-panel { flex: 1; min-width: 0; display: flex; flex-direction: column; }
.center { justify-content: center; gap: 12px; padding: 0 13px 0 0; color: #555; font-family: "Liberation Sans", Arial, sans-serif; }
.hide { width: 47px; height: 19px; border: 1px solid #777; border-radius: 2px; font-size: 9px; }
.swatch { width: 14px; height: 14px; margin: 0 -4px 0 2px; border-radius: 2px; background: #4f2e91; }
.labeltab { position: relative; align-self: stretch; width: 28px; margin-right: -6px; background: #fff; border: solid #ddd; border-width: 0 1px; }
.labeltab b { position: absolute; left: 8px; top: 10px; color: #fff; font-size: 8px; line-height: 12px; }
.labeltab i { position: absolute; left: 10px; bottom: 3px; border: solid transparent; border-width: 4px 3px 0; border-top-color: #6d56a8; }
.compass { margin-right: 6px; }
.graph { position: relative; flex: 1; min-height: 0; }
.plot { position: absolute; inset: 0; overflow: hidden; }
.ptlabel { font: 12px "Liberation Sans", sans-serif; fill: #5b3aa5; stroke: #fff; stroke-width: 2px; paint-order: stroke; }
.popup { position: absolute; top: 0; left: 50%; margin-left: -64px; width: 148px; height: 29px; display: flex; align-items: center; gap: 4px; padding: 0 7px; background: #fefefe; border: solid #ddd; border-width: 0 1px 1px; border-radius: 0 0 5px 5px; box-shadow: 0 1px 3px rgba(0,0,0,.15); font: 9px "Liberation Sans", sans-serif; color: #000; }
.popup input { flex: 1; min-width: 0; height: 14px; padding: 0 1px; border: 0; border-bottom: 1px solid #5b4a9a; background: linear-gradient(#a9cdf2, #a9cdf2) 1px 1px / 7px 11px no-repeat; font: 9px "Liberation Sans", sans-serif; outline: 0; }
.controls { position: absolute; top: 3px; right: 3px; display: grid; gap: 4px; }
.ctl { width: 25px; height: 24px; }
.controls > .ctl, .zoomers { background: #ececec; border: 1px solid #d5d5d5; border-radius: 3px; box-shadow: 0 0 2px rgba(0,0,0,.12); }
.zoomers .ctl { width: 23px; } .zoomers .ctl + .ctl { border-top: 1px solid #d5d5d5; }

/* dock */
.dock-wrap { position: absolute; left: 0; right: 0; bottom: 4px; display: flex; justify-content: center; }
.dock { display: flex; align-items: flex-start; height: 50px; padding: 7px 2px 0 3px; border-radius: 14px; background: linear-gradient(90deg, #cfcfcf 0, #c9c8c8 500px, #b9b5b4 530px, #706666 570px, #6b6060 100%); box-shadow: 0 0 1px rgba(255,255,255,.6); }
.app { position: relative; width: 43px; height: 43px; display: flex; flex-direction: column; align-items: center; }
.app > svg { width: 34px; height: 34px; }
.wide > svg { width: 40px; height: 40px; margin-top: -3px; }
.run::after { content: ""; position: absolute; left: 20px; bottom: 2px; width: 3px; height: 3px; border-radius: 50%; background: #1c1c1c; }
.dock em { position: absolute; left: 28px; top: -4px; width: 16px; height: 16px; border-radius: 50%; background: #e12f3c; color: #fff; font-size: 9px; line-height: 16px; font-style: normal; text-align: center; }
.month, .day { width: 33px; text-align: center; }
.month { height: 11px; border-radius: 8px 8px 0 0; background: #e2393f; color: #fff; font-size: 7px; font-weight: 600; line-height: 11px; }
.day { height: 23px; border-radius: 0 0 8px 8px; background: #f3f3f1; font-size: 18px; line-height: 20px; color: #222; }
.tile { font: 700 11px "Liberation Sans", sans-serif; fill: #fff; }
.sep { width: 20px; height: 37px; background: linear-gradient(#494040, #494040) 50% 0 / 1px 100% no-repeat; }
.thumb > svg { width: 38px; height: 28px; margin-top: 3px; }
.doc-thumb { width: 38px; height: 22px; margin-top: 6px; padding: 5px 4px; background: #f5f5f5; border-top: 3px solid #dadada; display: grid; gap: 2px; align-content: start; }
.doc-thumb i { height: 1px; width: 20px; background: #999; }
.doc-thumb.tall { height: 27px; margin-top: 4px; }
.doc-thumb.purple { border-bottom: 3px solid #9b86dc; }
.thumb > .mini { position: absolute; left: 27px; top: 20px; width: 13px; height: 13px; margin: 0; }
```
